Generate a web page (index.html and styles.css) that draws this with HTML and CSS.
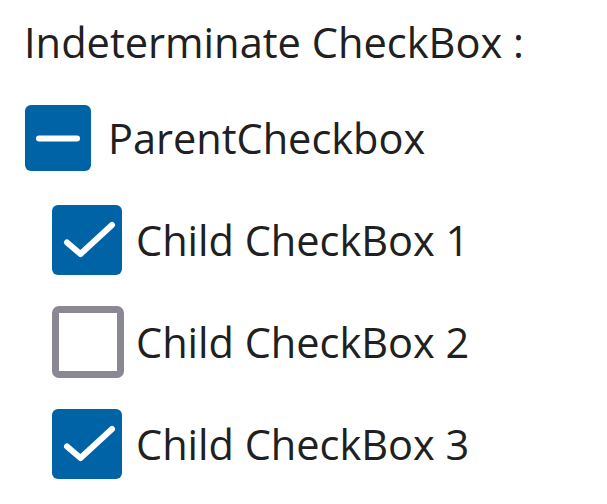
FILE: index.html
```html
<!DOCTYPE html>
<html lang="en">
<head>
<meta charset="utf-8">
<title>Indeterminate CheckBox</title>
<link rel="stylesheet" href="styles.css">
</head>
<body>
<div class="page">
  <h1 class="title">Indeterminate CheckBox :</h1>
  <div class="list">
    <div class="row parent">
      <span class="box box-on box-parent">
        <svg viewBox="0 0 66 66" width="66" height="66"><line x1="14" y1="33.5" x2="52" y2="33.5" stroke="#fff" stroke-width="6" stroke-linecap="round"/></svg>
      </span>
      <span class="label">ParentCheckbox</span>
    </div>
    <div class="row child">
      <span class="slot">
        <span class="box box-on">
          <svg viewBox="0 0 70 70" width="70" height="70"><polyline points="15,37.5 28.5,49 60,20" fill="none" stroke="#fff" stroke-width="6" stroke-linecap="round" stroke-linejoin="round"/></svg>
        </span>
      </span>
      <span class="label">Child CheckBox 1</span>
    </div>
    <div class="row child">
      <span class="slot">
        <span class="box box-off"></span>
      </span>
      <span class="label">Child CheckBox 2</span>
    </div>
    <div class="row child">
      <span class="slot">
        <span class="box box-on">
          <svg viewBox="0 0 70 70" width="70" height="70"><polyline points="15,37.5 28.5,49 60,20" fill="none" stroke="#fff" stroke-width="6" stroke-linecap="round" stroke-linejoin="round"/></svg>
        </span>
      </span>
      <span class="label">Child CheckBox 3</span>
    </div>
  </div>
</div>
</body>
</html>
```
FILE: styles.css
```css
html, body {
  margin: 0;
  padding: 0;
  background: #ffffff;
}

.page {
  font-family: "Open Sans", "Noto Sans", sans-serif;
  color: #202020;
  padding: 14px 0 0 24px;
}

.title {
  margin: 0;
  font-size: 41.6px;
  font-weight: 400;
  line-height: normal;
}

.list {
  display: flex;
  flex-direction: column;
  margin-top: 17px;
}

.row {
  display: flex;
  align-items: center;
  height: 102px;
  gap: 17px;
}

.row.parent {
  padding-left: 1px;
}

.row.child {
  padding-left: 28px;
  gap: 12px;
}

.slot {
  display: flex;
  align-items: center;
  flex: none;
  width: 72px;
  height: 72px;
}

.label {
  font-size: 41.5px;
  line-height: normal;
}

.box {
  display: flex;
  flex: none;
  width: 70px;
  height: 70px;
  box-sizing: border-box;
  border-radius: 6px;
}

.box svg {
  display: block;
}

.box-on {
  background: #0063a6;
}

.box-parent {
  width: 66px;
  height: 66px;
}

.box-off {
  width: 72px;
  height: 72px;
  border: 7px solid #8b8893;
  border-radius: 7px;
  background: #ffffff;
}
```
